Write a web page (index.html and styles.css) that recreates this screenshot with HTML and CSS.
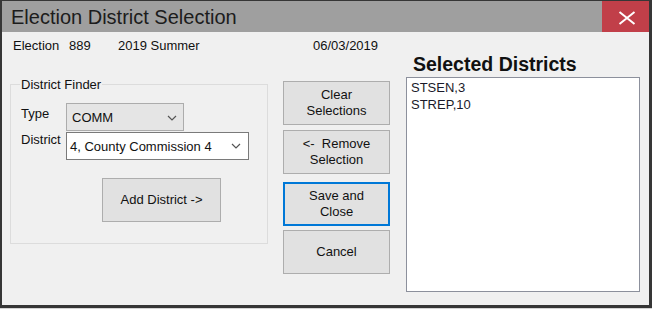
FILE: index.html
```html
<!DOCTYPE html>
<html lang="en">
<head>
    <meta charset="UTF-8">
    <meta name="viewport" content="width=device-width, initial-scale=1.0">
    <title>Election District Selection</title>
    <link rel="stylesheet" href="styles.css">
</head>
<body>
    <div class="window">
        <div class="titlebar">
            <span class="title">Election District Selection</span>
            <button class="close" aria-label="Close">
                <svg width="18" height="14" viewBox="0 0 18 14"><path d="M1.5 1 L16.5 13 M16.5 1 L1.5 13" stroke="#fff" stroke-width="2" fill="none"/></svg>
            </button>
        </div>

        <div class="body">
            <div class="left">
                <div class="info">
                    <span class="info-label">Election</span>
                    <span class="info-num">889</span>
                    <span class="info-name">2019 Summer</span>
                    <span>06/03/2019</span>
                </div>

                <div class="row">
                    <fieldset class="finder">
                        <legend>District Finder</legend>
                        <div class="field field-type">
                            <label>Type</label>
                            <div class="combo combo-type">
                                <span>COMM</span>
                                <svg width="10" height="6" viewBox="0 0 10 6"><path d="M1 1 L5 5 L9 1" stroke="#555" stroke-width="1.2" fill="none"/></svg>
                            </div>
                        </div>
                        <div class="field field-district">
                            <label>District</label>
                            <div class="combo combo-district">
                                <span>4, County Commission 4</span>
                                <svg width="10" height="6" viewBox="0 0 10 6"><path d="M1 1 L5 5 L9 1" stroke="#555" stroke-width="1.2" fill="none"/></svg>
                            </div>
                        </div>
                        <button class="btn btn-add">Add District -&gt;</button>
                    </fieldset>

                    <div class="actions">
                        <button class="btn">Clear<br>Selections</button>
                        <button class="btn btn-remove">&lt;-&nbsp; Remove<br>Selection</button>
                        <button class="btn btn-save">Save and<br>Close</button>
                        <button class="btn btn-cancel">Cancel</button>
                    </div>
                </div>
            </div>

            <div class="right">
                <h2>Selected Districts</h2>
                <div class="list">
                    <div>STSEN,3</div>
                    <div>STREP,10</div>
                </div>
            </div>
        </div>
    </div>
</body>
</html>
```

FILE: styles.css
```css
* {
    box-sizing: border-box;
}
body {
    margin: 0;
    background: #d4d4d4;
    font-family: "Liberation Sans", Arial, sans-serif;
    font-size: 13px;
    color: #111;
}
.window {
    width: 652px;
    height: 308px;
    background: #f0f0f0;
    border: solid #363636;
    border-width: 1px 3px 3px 2px;
}
.titlebar {
    height: 31px;
    background: #9f9f9f;
    display: flex;
    justify-content: space-between;
}
.title {
    font-size: 20px;
    line-height: 31px;
    padding: 1px 0 0 9px;
    color: #1c1c1c;
}
.close {
    width: 47px;
    height: 31px;
    border: 0;
    background: #c13f49;
    display: flex;
    align-items: center;
    justify-content: center;
    padding: 2px 0 0 3px;
}
.body {
    display: flex;
    padding-left: 8px;
}
.left {
    width: 380px;
}
.info {
    display: flex;
    margin-top: 6px;
    padding-left: 3px;
    line-height: 15px;
}
.info-label {
    width: 56px;
}
.info-num {
    width: 49px;
}
.info-name {
    width: 195px;
}
.row {
    display: flex;
    align-items: flex-start;
}
.finder {
    margin: 24px 0 0;
    padding: 0 9px;
    border: 1px solid #dcdcdc;
    width: 258px;
    height: 167px;
    min-width: 0;
}
.finder legend {
    padding: 0 1px;
    line-height: 15px;
}
.field {
    display: flex;
    align-items: flex-start;
}
.field label {
    width: 46px;
    padding-left: 1px;
    line-height: 15px;
}
.field-type {
    margin-top: 11px;
}
.field-type label {
    margin-top: 3px;
}
.field-district {
    margin-top: 1px;
}
.combo {
    display: flex;
    align-items: center;
    justify-content: space-between;
    height: 28px;
    border: 1px solid;
}
.combo-type {
    width: 118px;
    background: #e5e5e5;
    border-color: #acacac;
    padding: 1px 6px 0 5px;
}
.combo-district {
    width: 183px;
    background: #fff;
    border-color: #7a7a7a;
    padding: 0 7px 0 3px;
}
.btn {
    display: block;
    width: 107px;
    height: 44px;
    padding: 0;
    background: #e1e1e1;
    border: 1px solid #adadad;
    font: inherit;
    line-height: 16px;
    color: #111;
}
.btn-add {
    width: 119px;
    margin: 18px 0 0 82px;
}
.actions {
    margin: 28px 0 0 15px;
    width: 107px;
}
.btn-remove {
    margin-top: 5px;
}
.btn-save {
    margin-top: 8px;
    border: 2px solid #0078d7;
}
.btn-cancel {
    margin-top: 4px;
}
.right {
    margin-left: 16px;
    width: 234px;
}
.right h2 {
    margin: 21px 0 2px;
    padding-left: 7px;
    font-size: 19.5px;
    line-height: 22px;
    font-weight: bold;
    color: #111;
}
.list {
    height: 215px;
    background: #fff;
    border: 1px solid #8c909c;
    padding: 1px 4px;
    line-height: 17px;
    color: #1a1a2a;
}
```
